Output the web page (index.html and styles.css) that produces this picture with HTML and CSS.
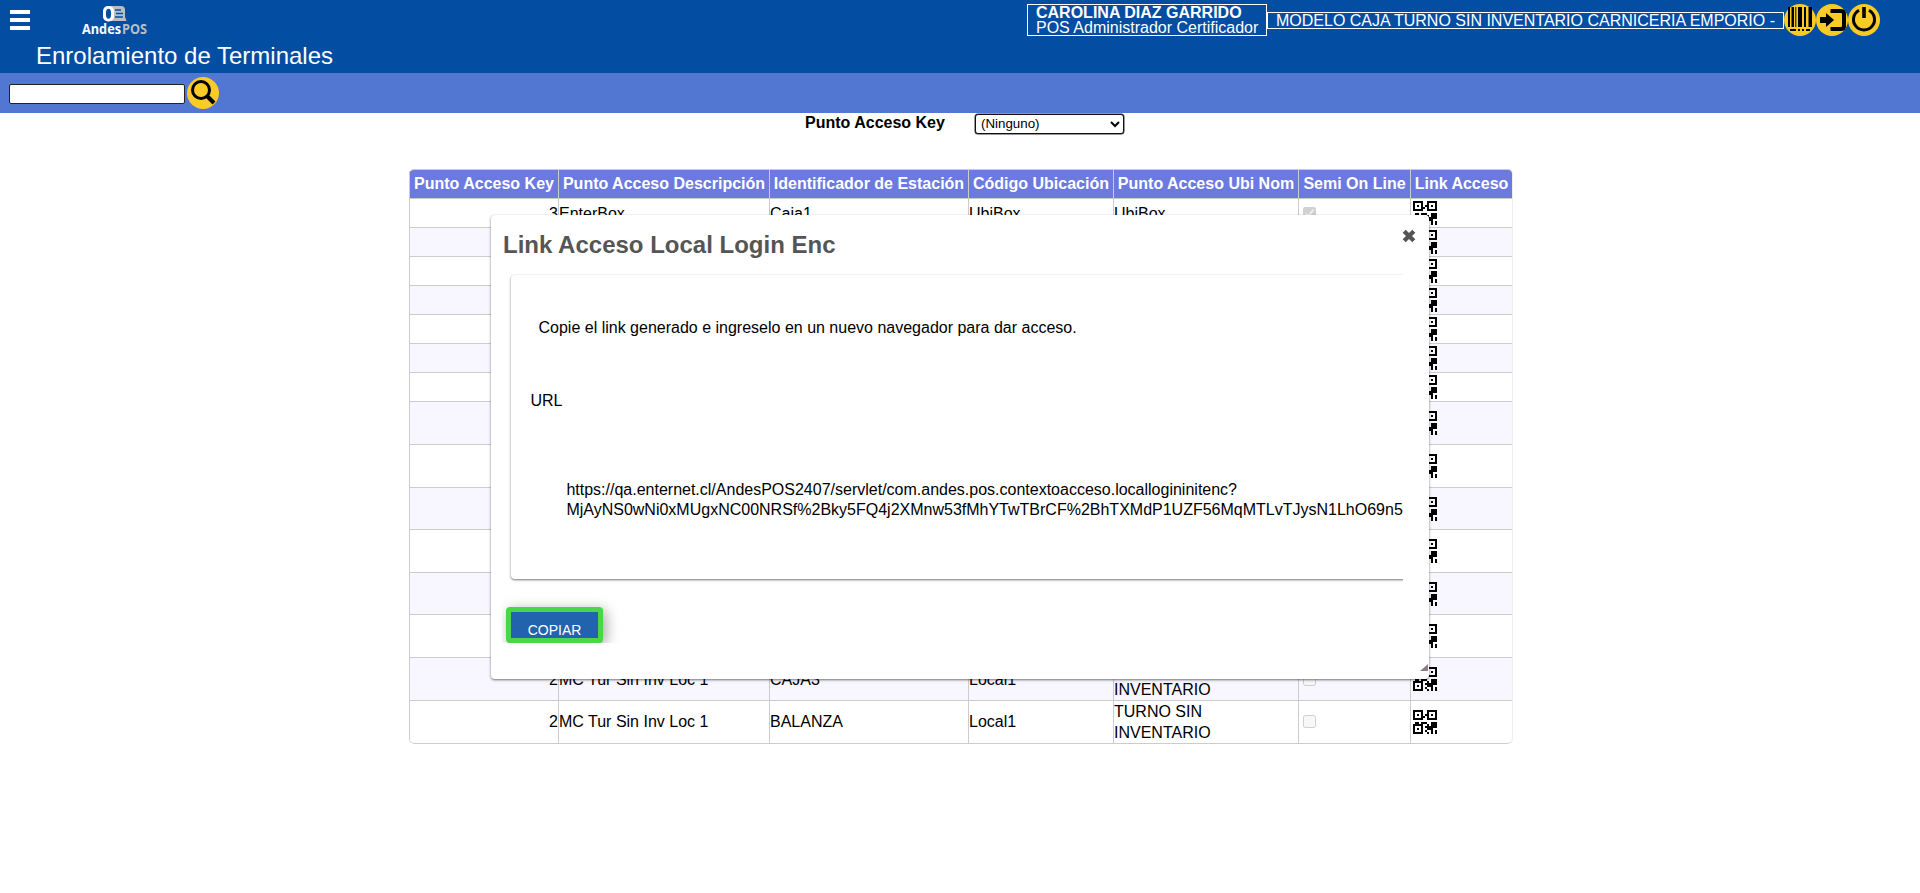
FILE: index.html
```
<!DOCTYPE html>
<html lang="es">
<head>
<meta charset="utf-8">
<title>Enrolamiento de Terminales</title>
<link rel="stylesheet" href="styles.css">
</head>
<body>
<header class="header">
  <div class="topbar">
    <div class="menu"><i></i><i></i><i></i></div>
    <svg class="logo" width="66" height="32" viewBox="0 0 66 32">
      <path fill="#b9bec6" d="M26 1h13q4 0 4 4v7l1.500 4H29q-5-4-3-15z"/>
      <rect x="21" y="1" width="11" height="15.500" rx="5" fill="#fff"/>
      <ellipse cx="26.500" cy="8.800" rx="2.600" ry="5" fill="#034ea2"/>
      <path stroke="#034ea2" stroke-width="1.300" d="M33 5h6M34 8.500h7M33 12h8"/>
      <text x="0" y="29" textLength="39" lengthAdjust="spacingAndGlyphs" class="logo-a">Andes</text>
      <text x="40" y="29" textLength="25" lengthAdjust="spacingAndGlyphs" class="logo-b">POS</text>
    </svg>
    <div class="session">
      <div class="user"><b>CAROLINA DIAZ GARRIDO</b><span>POS Administrador Certificador</span></div>
      <div class="store">MODELO CAJA TURNO SIN INVENTARIO CARNICERIA EMPORIO -</div>
      <svg class="round" viewBox="0 0 32 32"><circle cx="16" cy="16" r="16" fill="#f9cb24"/><path d="M4 3h2v20H4zM7.500 3H10v20H7.500zM14 3h4v20h-4zM20 3h2v20h-2zM24.500 3H28v20h-3.500zM11.300 3h1v20h-1zM6 25h6v2H6zM14 25h2v2h-2zM18 25h2v2h-2zM22 25h4v2h-4z"/></svg>
      <svg class="round" viewBox="0 0 32 32"><circle cx="16" cy="16" r="16" fill="#f9cb24"/><path d="M4 13h6V9l8 7-8 7v-4H4z"/><path d="M14.500 7H25q3 0 3 3v12q0 3-3 3H14.500" fill="none" stroke="#000" stroke-width="4"/></svg>
      <svg class="round" viewBox="0 0 32 32"><circle cx="16" cy="16" r="16" fill="#f9cb24"/><path d="M11 6.200a10.500 10.500 0 1 0 10 0" fill="none" stroke="#000" stroke-width="3"/><path d="M14.200 3h3.600v11h-3.600z"/></svg>
    </div>
  </div>
  <h1>Enrolamiento de Terminales</h1>
</header>
<div class="search">
  <input type="text">
  <svg class="round" viewBox="0 0 32 32"><circle cx="16" cy="16" r="16" fill="#f9cb24"/><circle cx="14" cy="13" r="8.500" fill="none" stroke="#000" stroke-width="3"/><path d="M20 19l7 7" stroke="#000" stroke-width="4"/></svg>
</div>
<div class="filter">
  <label>Punto Acceso Key</label>
  <select><option>(Ninguno)</option></select>
</div>
<table class="grid">
  <colgroup><col class="c1"><col class="c2"><col class="c3"><col class="c4"><col class="c5"><col class="c6"><col class="c7"></colgroup>
  <thead><tr><th>Punto Acceso Key</th><th>Punto Acceso Descripción</th><th>Identificador de Estación</th><th>Código Ubicación</th><th>Punto Acceso Ubi Nom</th><th>Semi On Line</th><th>Link Acceso</th></tr></thead>
  <tbody id="rows"></tbody>
</table>

<section class="dialog">
  <div class="dialog-head">
    <h2>Link Acceso Local Login Enc</h2>
    <svg width="14" height="14" viewBox="0 0 14 14"><path d="M2.200 2.200l9.600 9.600M11.800 2.200l-9.600 9.600" stroke="#555" stroke-width="4.300"/></svg>
  </div>
  <div class="frame">
    <div class="card">
      <p class="hint">Copie el link generado e ingreselo en un nuevo navegador para dar acceso.</p>
      <p class="label">URL</p>
      <p class="url">https://qa.enternet.cl/AndesPOS2407/servlet/com.andes.pos.contextoacceso.locallogininitenc?<br>MjAyNS0wNi0xMUgxNC00NRSf%2Bky5FQ4j2XMnw53fMhYTwTBrCF%2BhTXMdP1UZF56MqMTLvTJysN1LhO69n5</p>
    </div>
    <button class="copy">COPIAR</button>
  </div>
  <svg class="grip" width="8" height="7" viewBox="0 0 8 7"><path d="M0 7L8 0V7z" fill="#8a8084"/></svg>
</section>
<script src="rows.js"></script>
</body>
</html>
```
FILE: rows.js
```
// QR glyph modules, one character per module
const modules = [
  '11111..11111',
  '1...1..1...1',
  '1.1.1.11.1.1',
  '1...11.1...1',
  '11111..11111',
  '............',
  '.11.111..111',
  '11111..1.111',
  '1...1.111111',
  '1.1.1..111..',
  '1...1.1..1.1',
  '11111..1.1.1'
];
const qr = '<svg class="qr" viewBox="0 0 12 12" shape-rendering="crispEdges"><path d="' +
  modules.map((r, y) => [...r].map((c, x) => c === '1' ? `M${x} ${y}h1v1h-1z` : '').join('')).join('') +
  '"/></svg>';
const heights = [29, 29, 29, 29, 29, 29, 29, 43, 43, 42, 43, 42, 43, 43, 43];
const content = {
  0: ['3', 'EnterBox', 'Caja1', 'UbiBox', 'UbiBox', true],
  13: ['2', 'MC Tur Sin Inv Loc 1', 'CAJA3', 'Local1', 'TURNO SIN INVENTARIO', false],
  14: ['2', 'MC Tur Sin Inv Loc 1', 'BALANZA', 'Local1', 'TURNO SIN INVENTARIO', false]
};
document.getElementById('rows').innerHTML = heights.map((h, i) => {
  const d = content[i];
  const cells = d
    ? d.slice(0, 5).map(t => `<td>${t}</td>`).join('') + `<td><input type="checkbox" disabled ${d[5] ? 'checked' : ''}></td>`
    : '<td></td>'.repeat(6);
  return `<tr style="height:${h}px">${cells}<td>${qr}</td></tr>`;
}).join('');
```
FILE: styles.css
```
* { box-sizing: border-box; }
body { margin: 0; background: #fff; color: #000; font: 16px "Liberation Sans", Arial, sans-serif; }
h1, h2, p { margin: 0; }
.header { height: 73px; background: #034ea2; color: #fff; }
.topbar { display: flex; height: 41px; padding: 4px 40px 0 10px; align-items: flex-start; }
.menu { display: flex; flex-direction: column; gap: 4px; width: 20px; margin: 6px 52px 0 0; }
.menu i { height: 4px; background: #fff; }
.logo { margin-top: 1px; }
.logo text { font-family: "Open Sans", sans-serif; font-weight: 700; font-size: 13.5px; }
.logo-a { fill: #fff; }
.logo-b { fill: #b9bec6; }
.session { display: flex; align-items: center; margin-left: auto; height: 32px; }
.user { display: flex; flex-direction: column; width: 240px; height: 32px; border: 1px solid #fff; padding-left: 8px; line-height: 15px; white-space: nowrap; }
.store { width: 517px; height: 17px; border: 1px solid #fff; padding-left: 8px; line-height: 15px; white-space: nowrap; }
.round { width: 32px; height: 32px; flex: none; display: block; }
h1 { font-size: 24px; font-weight: 400; line-height: 30px; padding-left: 36px; }
.search { display: flex; gap: 2px; height: 40px; padding: 4px 0 0 9px; background: #5277d3; }
.search input { width: 176px; height: 20px; margin-top: 7px; border: 1px solid #222; border-radius: 2px; background: #fff; padding: 0; }
.filter { display: flex; height: 56px; padding-left: 805px; }
.filter label { font-weight: 700; width: 170px; line-height: 19px; }
.filter select { width: 149px; height: 20px; margin-top: 1px; border: 1px solid #111; border-radius: 3px; box-shadow: 0 0 0 .5px #333; background: #fff; color: #000; font: 13.333px "Liberation Sans", Arial, sans-serif; padding: 0 1px 1px; }
.grid { margin-left: 409px; width: 1104px; table-layout: fixed; border-collapse: separate; border-spacing: 0; border: solid #ccc; border-width: 1px 1px 0 0; border-right-color: #eee; border-radius: 5px; overflow: hidden; }
.c1 { width: 149px; } .c2 { width: 211px; } .c3 { width: 199px; } .c4 { width: 145px; } .c5 { width: 185px; } .c6 { width: 112px; }
.grid th, .grid td { border: solid #ccc; border-width: 0 0 1px 1px; padding: 0; }
.grid th { height: 29px; background: #6c7ae0; color: #fff; white-space: nowrap; line-height: 18px; }
.grid td { text-align: left; line-height: 21px; vertical-align: middle; }
.grid td:first-child { text-align: right; }
.grid td:nth-child(5) { padding-right: 60px; }
.grid tbody tr:nth-child(even) { background: #f8f6ff; }
.grid tr:last-child td:first-child { border-bottom-left-radius: 5px; }
.grid tr:last-child td:last-child { border-bottom-right-radius: 5px; }
.grid tr:last-child td:nth-child(-n+4), .grid tr:last-child td:nth-child(6) { padding-bottom: 2px; }
.grid input { display: block; width: 13px; height: 13px; margin: 0 0 0 4px; }
.qr { display: block; width: 24px; height: 24px; margin-left: 2px; }
.dialog { position: absolute; left: 491px; top: 215px; width: 938px; height: 464px; background: #fff; border-radius: 4px; box-shadow: 0 1px 3px rgba(0,0,0,.3), 0 1px 2px rgba(0,0,0,.3); }
.dialog-head { display: flex; justify-content: space-between; height: 58px; padding: 14px 13px 0 12px; color: #555; }
h2 { font-size: 24px; line-height: 32px; }
.frame { width: 901px; height: 370px; margin-left: 11px; padding: 2px 0 0 9px; overflow: hidden; }
.card { width: 920px; height: 304px; border-radius: 4px; box-shadow: 0 1px 3px rgba(0,0,0,.25), 0 1px 2px rgba(0,0,0,.35); }
.hint { padding: 43px 0 0 27.5px; line-height: 20px; }
.label { padding: 53px 0 0 19.5px; line-height: 20px; }
.url { padding: 69px 0 0 55.4px; line-height: 20px; white-space: nowrap; }
.copy { display: block; width: 97px; height: 36px; margin: 28px 0 0 -5px; padding: 10px 0 0; border: 5px solid #4bd54b; border-radius: 4px; background: #2263ae; color: #fff; font: 14px "Liberation Sans", Arial, sans-serif; box-shadow: 3px 3px 14px rgba(0,0,0,.35); }
.grip { position: absolute; right: 1px; bottom: 8px; }
```
